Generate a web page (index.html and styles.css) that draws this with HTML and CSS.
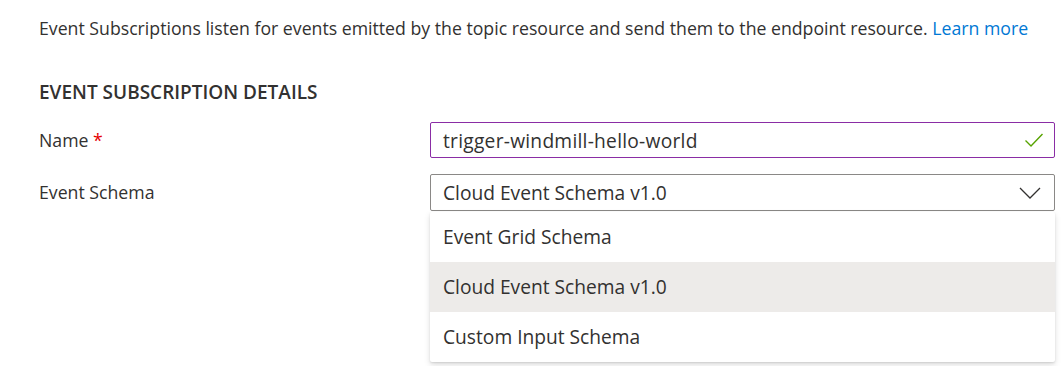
FILE: index.html
```html
<!DOCTYPE html>
<html>
<head>
<meta charset="utf-8">
<link rel="stylesheet" href="styles.css">
</head>
<body>
<div class="page">
  <p class="intro">Event Subscriptions listen for events emitted by the topic resource and send them to the endpoint resource. <a class="link" href="#">Learn more</a></p>
  <h2 class="section">EVENT SUBSCRIPTION DETAILS</h2>
  <div class="form">
    <div class="row">
      <div class="label">Name <span class="req">*</span></div>
      <div class="field">
        <div class="input valid">
          <span class="value name-value">trigger-windmill-hello-world</span>
          <svg class="check" width="20" height="16" viewBox="0 0 20 16"><path d="M1.5 8.5 L7 14 L18.5 2" fill="none" stroke="#57a300" stroke-width="1.4"/></svg>
        </div>
      </div>
    </div>
    <div class="row">
      <div class="label">Event Schema</div>
      <div class="field">
        <div class="input select">
          <span class="value">Cloud Event Schema v1.0</span>
          <svg class="chev" width="22" height="12" viewBox="0 0 22 12"><path d="M1 1 L11 11 L21 1" fill="none" stroke="#323130" stroke-width="1.3"/></svg>
        </div>
        <ul class="menu">
          <li class="opt">Event Grid Schema</li>
          <li class="opt selected">Cloud Event Schema v1.0</li>
          <li class="opt">Custom Input Schema</li>
        </ul>
      </div>
    </div>
  </div>
</div>
</body>
</html>
```

FILE: styles.css
```css
html, body {
  margin: 0;
  padding: 0;
  background: #ffffff;
}
body {
  font-family: "Open Sans", "Noto Sans", sans-serif;
  color: #323130;
  min-height: 366px;
}
.page {
  padding: 16px 0 0 39px;
  width: 1016px;
}
.intro {
  margin: 0;
  font-size: 17.7px;
  line-height: 24px;
  white-space: nowrap;
}
.link {
  color: #0078d4;
  text-decoration: none;
}
.section {
  margin: 40px 0 0 0;
  font-size: 19px;
  font-weight: 600;
  line-height: 24px;
}
.form {
  margin-top: 18px;
  display: flex;
  flex-direction: column;
  gap: 16px;
}
.row {
  display: flex;
  align-items: flex-start;
}
.label {
  width: 391px;
  font-size: 17.7px;
  line-height: 36px;
}
.req {
  color: #e50000;
}
.field {
  position: relative;
  width: 625px;
}
.input {
  box-sizing: border-box;
  height: 37px;
  border: 1px solid #8a8886;
  border-radius: 2px;
  display: flex;
  align-items: center;
  justify-content: space-between;
  padding: 0 10px 0 12px;
  font-size: 19.2px;
}
.input.valid {
  height: 36px;
  border-color: #8a2da5;
}
.name-value {
  letter-spacing: 0.25px;
}
.chev {
  margin-right: 3px;
}
.menu {
  position: absolute;
  z-index: 10;
  left: 0;
  top: 38px;
  width: 625px;
  margin: 0;
  padding: 0;
  list-style: none;
  background: #ffffff;
  border-radius: 2px;
  box-shadow: 0 3px 6px rgba(0,0,0,0.13), 0 1px 2px rgba(0,0,0,0.10);
}
.opt {
  display: block;
  height: 50px;
  line-height: 50px;
  padding-left: 13px;
  font-size: 19.2px;
}
.opt.selected {
  background: #edebe9;
}
```
